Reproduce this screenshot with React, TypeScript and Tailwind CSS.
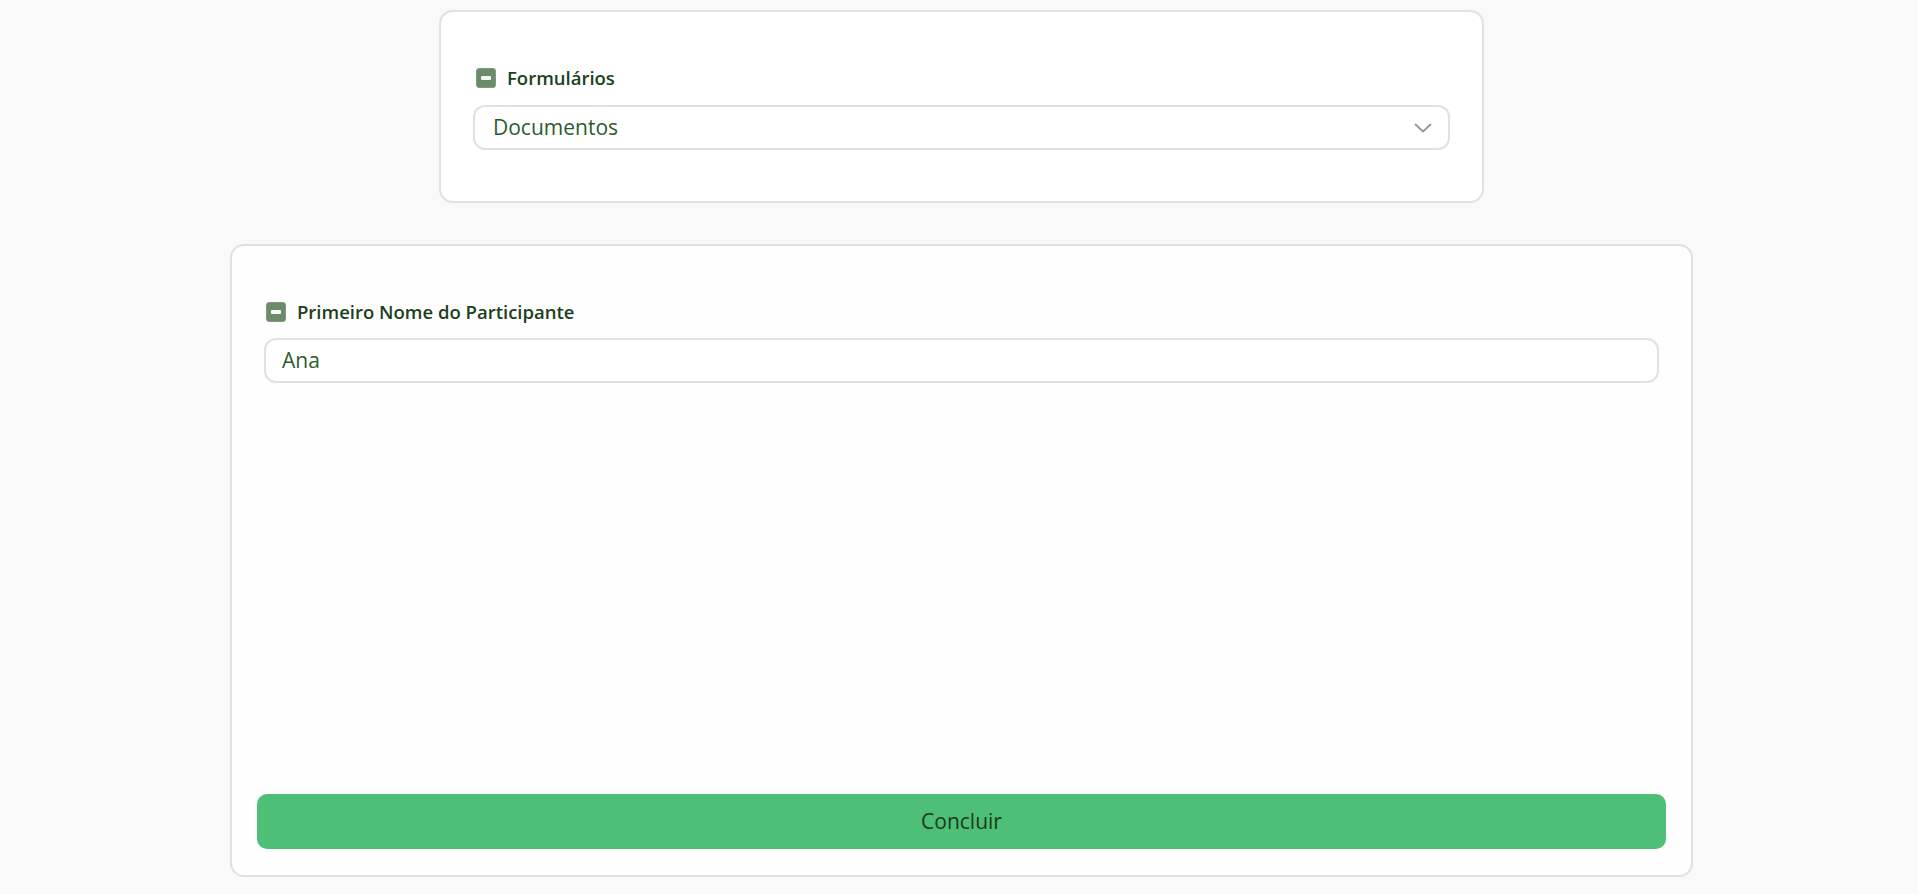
import React from "react";

function MinusBox() {
  return (
    <span className="flex h-[20px] w-[20px] shrink-0 items-center justify-center rounded-[3px] border border-[#809c80] bg-[#6b8b6b]">
      <span className="block h-[4px] w-[10px] rounded-[1px] bg-[#f4f7f4]" />
    </span>
  );
}

function Label({ text, offset }: { text: string; offset: string }) {
  return (
    <div className={`flex h-[22px] items-center gap-[11px] ${offset}`}>
      <MinusBox />
      <span className="text-[18.5px] font-semibold leading-none text-[#1c3f1c]">{text}</span>
    </div>
  );
}

export default function App() {
  return (
    <div
      className="min-h-[894px] w-full bg-[#f9f9f9] pl-[5px] pt-[10px]"
      style={{ fontFamily: '"Open Sans", "Noto Sans", sans-serif' }}
    >
      <div className="flex flex-col items-center">
        <div className="w-[1045px] rounded-[14px] border-2 border-[#dde3dd] bg-white px-[32px] pb-[51px] pt-[55px]">
          <Label text="Formulários" offset="ml-[3px]" />
          <div className="mt-[16px] flex h-[45px] items-center justify-between rounded-[12px] border-2 border-[#dde3dd] bg-white pl-[18px] pr-[16px]">
            <span className="text-[21px] leading-none text-[#2c5a2e]">Documentos</span>
            <svg width="18" height="10" viewBox="0 0 18 10" fill="none">
              <polyline
                points="1.5,1.5 9,8.5 16.5,1.5"
                stroke="#8aa08a"
                strokeWidth="1.8"
                strokeLinecap="round"
                strokeLinejoin="round"
              />
            </svg>
          </div>
        </div>

        <div className="mt-[41px] flex h-[633px] w-[1463px] flex-col rounded-[14px] border-2 border-[#dde3dd] bg-[#fefefe] px-[25px] pb-[26px] pt-[55px]">
          <div className="mx-[7px]">
            <Label text="Primeiro Nome do Participante" offset="ml-[2px]" />
            <div className="mt-[15px] flex h-[45px] items-center rounded-[12px] border-2 border-[#dde3dd] bg-white pl-[16px]">
              <span className="text-[21px] leading-none text-[#2c5a2e]">Ana</span>
            </div>
          </div>
          <button className="mt-auto flex h-[55px] w-full items-center justify-center rounded-[10px] bg-[#4dbf76] text-[21px] text-[#1d3a1f]">
            Concluir
          </button>
        </div>
      </div>
    </div>
  );
}
